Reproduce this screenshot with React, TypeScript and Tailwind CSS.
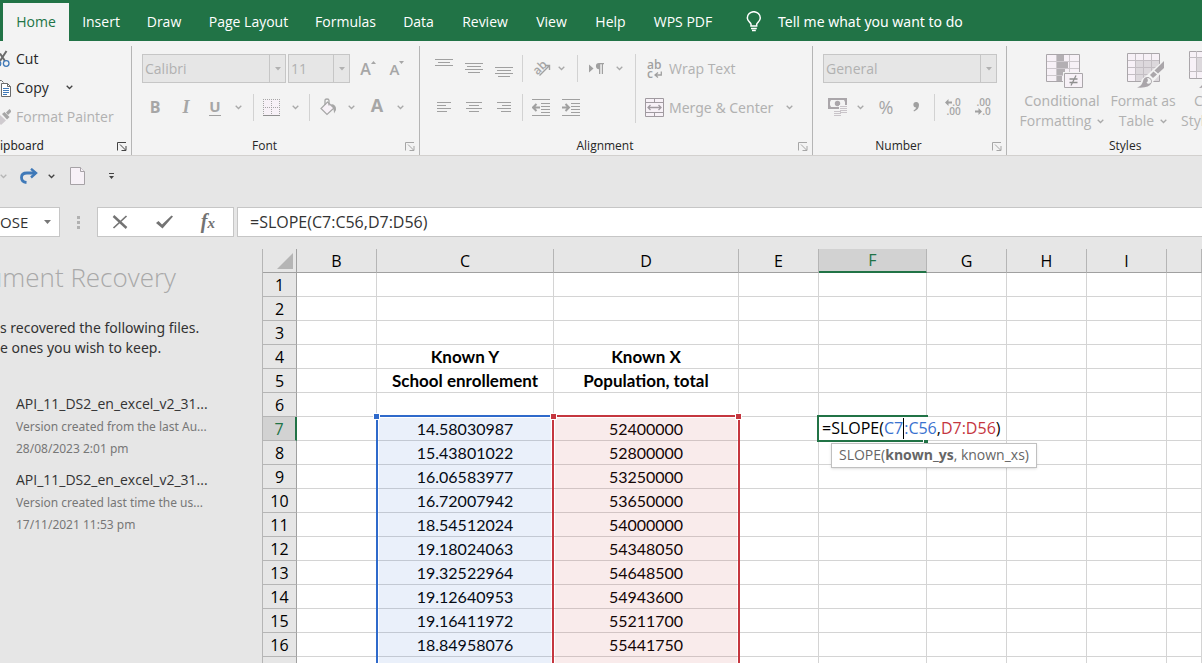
import React from "react";

const tabs = [
  { name: "Insert", width: "w-16" },
  { name: "Draw", width: "w-[62px]" },
  { name: "Page Layout", width: "w-[107px]" },
  { name: "Formulas", width: "w-[87px]" },
  { name: "Data", width: "w-[59px]" },
  { name: "Review", width: "w-[74px]" },
  { name: "View", width: "w-[59px]" },
  { name: "Help", width: "w-[59px]" },
  { name: "WPS PDF", width: "w-[86px]" },
];

const columns = ["B", "C", "D", "E", "F", "G", "H", "I", ""];

const rows: { y: string; x: string }[] = [
  { y: "", x: "" },
  { y: "", x: "" },
  { y: "", x: "" },
  { y: "Known Y", x: "Known X" },
  { y: "School enrollement", x: "Population, total" },
  { y: "", x: "" },
  { y: "14.58030987", x: "52400000" },
  { y: "15.43801022", x: "52800000" },
  { y: "16.06583977", x: "53250000" },
  { y: "16.72007942", x: "53650000" },
  { y: "18.54512024", x: "54000000" },
  { y: "19.18024063", x: "54348050" },
  { y: "19.32522964", x: "54648500" },
  { y: "19.12640953", x: "54943600" },
  { y: "19.16411972", x: "55211700" },
  { y: "18.84958076", x: "55441750" },
  { y: "", x: "" },
];

const recovered = [
  {
    file: "API_11_DS2_en_excel_v2_31...",
    note: "Version created from the last Au...",
    date: "28/08/2023 2:01 pm",
  },
  {
    file: "API_11_DS2_en_excel_v2_31...",
    note: "Version created last time the us...",
    date: "17/11/2021 11:53 pm",
  },
];

/* ---------- small shared pieces ---------- */

const Chevron = ({ color = "#a9a9a9" }: { color?: string }) => (
  <svg width="7" height="5" viewBox="0 0 7 5" fill="none" className="shrink-0">
    <path d="M0.7 0.8 L3.5 3.5 L6.3 0.8" stroke={color} strokeWidth="1.3" />
  </svg>
);

const Tool = ({
  label,
  width,
  children,
}: {
  label: string;
  width: string;
  children: React.ReactNode;
}) => (
  <button
    aria-label={label}
    className={`flex h-7 shrink-0 items-center justify-center text-[#a6a6a6] ${width}`}
  >
    {children}
  </button>
);

const Divider = () => <div className="h-[27px] w-px shrink-0 bg-[#d2d2d2]" />;

const Combo = ({
  label,
  value,
  width,
}: {
  label: string;
  value: string;
  width: string;
}) => (
  <div
    className={`flex h-[29px] shrink-0 border border-[#c6c6c6] bg-[#e6e6e6] ${width}`}
  >
    <select
      aria-label={label}
      className="min-w-0 flex-1 appearance-none bg-transparent pl-[2px] text-[14px] text-[#b1b1b1] outline-none"
    >
      <option>{value}</option>
    </select>
    <div className="flex w-4 items-center justify-center border-l border-[#c6c6c6]">
      <svg width="6" height="4" viewBox="0 0 6 4">
        <path d="M0 0H6L3 3.5Z" fill="#b1b1b1" />
      </svg>
    </div>
  </div>
);

const Launcher = ({ color = "#a6a6a6" }: { color?: string }) => (
  <svg width="10" height="9" viewBox="0 0 10 9" fill="none" stroke={color}>
    <path d="M0.5 8.5V0.5H9" />
    <path d="M3 2.5L8.5 8M9 4V8.5H4.5" />
  </svg>
);

const GroupLabel = ({ name }: { name: string }) => (
  <div className="flex h-[18px] items-center pr-1 text-[12px] text-[#262626]">
    <span className="flex-1 pr-2 text-center">{name}</span>
    <button aria-label={`${name} settings`}>
      <Launcher />
    </button>
  </div>
);

/* stacked lines used by the six alignment buttons */
const Lines = ({ items }: { items: [number, number, number][] }) => (
  <svg width="18" height="20" viewBox="0 0 18 20" fill="#a0a0a0">
    {items.map(([x, y, w]) => (
      <rect key={y} x={x} y={y} width={w} height="1" />
    ))}
  </svg>
);

/* ---------- ribbon ---------- */

const TopTabs = () => (
  <nav className="flex h-[41px] shrink-0 items-end bg-[#217346] pl-[3px] text-[14px] text-white">
    <button className="h-[38px] w-[66px] shrink-0 bg-[#f3f3f3] pb-[2px] text-[#217346]">
      Home
    </button>
    {tabs.map((tab) => (
      <button
        key={tab.name}
        className={`h-[38px] shrink-0 pb-[2px] ${tab.width}`}
      >
        {tab.name}
      </button>
    ))}
    <button className="flex h-[38px] items-center gap-4 pb-[2px] pl-5 font-['Noto_Sans',sans-serif] whitespace-nowrap">
      <svg
        width="16"
        height="21"
        viewBox="0 0 16 21"
        fill="none"
        stroke="white"
        strokeWidth="1.5"
      >
        <path d="M5 15V13.2C5 11.8 1.3 10.3 1.3 6.9A6.5 6.2 0 0 1 14.3 6.9C14.3 10.3 10.7 11.8 10.7 13.2V15Z" />
        <path d="M5 17.4H10.8M6 19.6H9.8" />
      </svg>
      Tell me what you want to do
    </button>
  </nav>
);

const ClipboardGroup = () => (
  <section className="flex w-[132px] shrink-0 flex-col justify-between border-r border-[#b5b5b5] text-[14px] text-[#262626]">
    <div className="flex flex-col">
      <button className="flex h-[27px] items-center gap-[5px] pb-[2px]">
        <svg width="11" height="18" viewBox="0 0 11 18" fill="none">
          <path d="M6.5 1L0 11M0 3.5L5 11" stroke="#6b6b6b" strokeWidth="2" />
          <circle cx="6.2" cy="13.5" r="2.8" stroke="#3f79b8" strokeWidth="1.3" />
          <path d="M0 11.5Q1.5 13.5 0 16" stroke="#3f79b8" strokeWidth="1.3" />
        </svg>
        Cut
      </button>
      <button className="flex h-[29px] items-center gap-[5px]">
        <svg width="11" height="18" viewBox="0 0 11 18" fill="none">
          <path d="M0 1.5H1.5L3.5 3.5" stroke="#6b6b6b" />
          <path d="M1.5 4.5H7.5L10.5 7.5V17.5H1.5Z" fill="white" stroke="#6b6b6b" />
          <path d="M7.5 4.5V7.5H10.5" stroke="#6b6b6b" />
          <path d="M3 9.5H9M3 11.5H9M3 13.5H9M3 15.5H7" stroke="#3f79b8" />
        </svg>
        Copy
        <span className="pl-3">
          <Chevron color="#444444" />
        </span>
      </button>
      <button className="flex h-[29px] items-center gap-[5px] whitespace-nowrap text-[#b1b1b1]">
        <svg width="11" height="18" viewBox="0 0 11 18">
          <path d="M0 7L6 12.5L1 17L0 16Z" fill="#cfcbcf" />
          <path d="M2 6L4.5 4L9.5 9L7 11.5Z" fill="#a6a6a6" />
          <path d="M6 4.5L9.5 1L11 2.5V4L8 7Z" fill="#a6a6a6" />
        </svg>
        Format Painter
      </button>
    </div>
    <div className="flex h-[18px] items-center justify-between pr-1 text-[12px]">
      <span className="font-['Noto_Sans',sans-serif]">ipboard</span>
      <button aria-label="Clipboard settings">
        <Launcher color="#444444" />
      </button>
    </div>
  </section>
);

const FontGroup = () => (
  <section className="flex w-[288px] shrink-0 flex-col justify-between border-r border-[#b5b5b5]">
    <div className="flex flex-col gap-[10px] pt-2">
      <div className="flex items-center pl-[10px]">
        <Combo label="Font" value="Calibri" width="w-36" />
        <div className="w-[2px]" />
        <Combo label="Font size" value="11" width="w-[62px]" />
        <div className="w-[3px]" />
        <Tool label="Increase font size" width="w-[30px]">
          <span className="text-[16px] leading-5 font-semibold">A</span>
          <svg width="5" height="16" viewBox="0 0 5 16">
            <path d="M0 3L2.5 0L5 3Z" fill="#a6a6a6" />
          </svg>
        </Tool>
        <Tool label="Decrease font size" width="w-7">
          <span className="text-[15px] leading-5 font-semibold">A</span>
          <svg width="5" height="16" viewBox="0 0 5 16">
            <path d="M0 0H5L2.5 3Z" fill="#a6a6a6" />
          </svg>
        </Tool>
      </div>
      <div className="flex items-center pl-2">
        <Tool label="Bold" width="w-[30px]">
          <span className="text-[16px] font-bold">B</span>
        </Tool>
        <Tool label="Italic" width="w-8">
          <span className="font-['Liberation_Serif',serif] text-[18px] font-bold italic">I</span>
        </Tool>
        <Tool label="Underline" width="w-[26px]">
          <span className="border-b border-[#a0a0a0] text-[15px] leading-[17px] font-bold">U</span>
        </Tool>
        <Tool label="Underline options" width="w-5">
          <Chevron />
        </Tool>
        <div className="w-[5px]" />
        <Divider />
        <Tool label="Borders" width="w-[34px]">
          <svg width="17" height="17" viewBox="0 0 17 17" fill="none">
            <path d="M0.5 0.5H16.5V16H0.5Z" fill="#f7f1f7" />
            <path d="M0 0.5H17M0 8.5H17M0.5 0V16M8.5 0V16M16.5 0V16" stroke="#a6a6a6" strokeDasharray="1 1" />
            <path d="M0 16.5H17" stroke="#8f8f8f" />
          </svg>
        </Tool>
        <Tool label="Borders options" width="w-[14px]">
          <Chevron />
        </Tool>
        <div className="w-[7px]" />
        <Divider />
        <Tool label="Fill colour" width="w-9">
          <svg width="17" height="18" viewBox="0 0 17 18" fill="none">
            <path d="M7.5 4L14 10L7 16.5L1 10.5Z" fill="#f7f1f7" stroke="#a6a6a6" strokeWidth="1.2" />
            <path d="M5 7V2.5Q5 1 7 1T9 2.5V7.5" stroke="#a6a6a6" strokeWidth="1.3" />
            <path d="M11 6Q16.5 6.5 16 12L14 15.5Q14 10 11 6Z" fill="#a6a6a6" />
          </svg>
        </Tool>
        <Tool label="Fill colour options" width="w-[10px]">
          <Chevron />
        </Tool>
        <Tool label="Font colour" width="w-[42px]">
          <span className="pb-1 text-[18px] font-bold">A</span>
        </Tool>
        <Tool label="Font colour options" width="w-1">
          <Chevron />
        </Tool>
      </div>
    </div>
    <GroupLabel name="Font" />
  </section>
);

const AlignmentGroup = () => (
  <section className="flex w-[393px] shrink-0 flex-col justify-between border-r border-[#b5b5b5]">
    <div className="flex pt-2">
      <div className="flex flex-col gap-[10px] pl-[9px]">
        <div className="flex h-[29px] items-center">
          <Tool label="Top align" width="w-[30px]">
            <Lines items={[[0, 0, 18], [3, 3, 12], [0, 6, 18]]} />
          </Tool>
          <Tool label="Middle align" width="w-[30px]">
            <Lines items={[[0, 4, 18], [2, 7, 14], [0, 10, 18], [3, 13, 12]]} />
          </Tool>
          <Tool label="Bottom align" width="w-[30px]">
            <Lines items={[[0, 8, 18], [2, 11, 14], [0, 14, 18], [3, 17, 12]]} />
          </Tool>
          <div className="w-[3px]" />
          <Divider />
          <Tool label="Orientation" width="w-9">
            <span className="relative flex size-[19px] items-center justify-center">
              <span className="-rotate-45 pb-1 text-[12px] leading-3 font-semibold">ab</span>
              <svg width="19" height="18" viewBox="0 0 19 18" fill="none" className="absolute inset-0">
                <path d="M7.5 16.5L17 7M13 6.5H17.5V11" stroke="#a0a0a0" strokeWidth="1.4" />
              </svg>
            </span>
          </Tool>
          <Tool label="Orientation options" width="w-1">
            <Chevron />
          </Tool>
          <div className="w-[14px]" />
          <Divider />
          <Tool label="Text direction" width="w-9">
            <svg width="15" height="12" viewBox="0 0 15 12" fill="#a0a0a0">
              <path d="M0 1.5L4.5 5.5L0 9.5Z" />
              <path d="M10 0H15V1.3H14V11H12.8V1.3H11.3V11H10V6.2A3.1 3.1 0 0 1 10 0Z" />
            </svg>
          </Tool>
          <Tool label="Text direction options" width="w-[10px]">
            <Chevron />
          </Tool>
        </div>
        <div className="flex items-center">
          <Tool label="Align left" width="w-[30px]">
            <Lines items={[[2, 5, 14], [2, 8, 9], [2, 11, 14], [2, 14, 10]]} />
          </Tool>
          <Tool label="Center" width="w-[30px]">
            <Lines items={[[1, 5, 16], [4, 8, 10], [1, 11, 16], [4, 14, 10]]} />
          </Tool>
          <Tool label="Align right" width="w-[30px]">
            <Lines items={[[2, 5, 14], [7, 8, 9], [2, 11, 14], [6, 14, 10]]} />
          </Tool>
          <div className="w-[3px]" />
          <Divider />
          <div className="w-[3px]" />
          <Tool label="Decrease indent" width="w-[30px]">
            <svg width="18" height="17" viewBox="0 0 18 17" fill="none" stroke="#a0a0a0">
              <path d="M0 0.5H18M9 4.5H18M9 7.5H18M9 10.5H18M9 13.5H18M0 16.5H18" />
              <path d="M8 8.5H1.5M4.5 5L1 8.5L4.5 12" strokeWidth="2" />
            </svg>
          </Tool>
          <Tool label="Increase indent" width="w-[30px]">
            <svg width="18" height="17" viewBox="0 0 18 17" fill="none" stroke="#a0a0a0">
              <path d="M0 0.5H18M9 4.5H18M9 7.5H18M9 10.5H18M9 13.5H18M0 16.5H18" />
              <path d="M0 8.5H7M3.5 5L7 8.5L3.5 12" strokeWidth="2" />
            </svg>
          </Tool>
        </div>
      </div>
      <div className="ml-[11px] h-[69px] w-px bg-[#d2d2d2]" />
      <div className="flex flex-col gap-[10px] pl-[9px] text-[14px] text-[#b1b1b1]">
        <button className="flex h-[29px] items-center gap-[6px] whitespace-nowrap">
          <span className="flex w-[18px] flex-col items-start pl-[2px] text-[12px] leading-[9px] font-semibold text-[#a0a0a0]">
            <span>ab</span>
            <span className="flex items-end gap-px">
              c
              <svg width="8" height="7" viewBox="0 0 8 7" fill="none">
                <path d="M7.3 0.5V4H1.5M4 1.5L1 4L4 6.5" stroke="#a0a0a0" strokeWidth="1.3" />
              </svg>
            </span>
          </span>
          Wrap Text
        </button>
        <button className="flex h-7 items-center gap-[5px] whitespace-nowrap">
          <svg width="19" height="19" viewBox="0 0 19 19" fill="none" stroke="#a09aa0">
            <path d="M0.5 0.5H18.5V18.5H0.5Z" fill="#f7f1f7" />
            <path d="M0.5 4.5H18.5M0.5 14.5H18.5M9.5 0.5V4.5M9.5 14.5V18.5" />
            <path d="M3 9.5H16M5.5 7L3 9.5L5.5 12M13.5 7L16 9.5L13.5 12" strokeWidth="1.3" />
          </svg>
          <span className="font-['Noto_Sans',sans-serif]">Merge &amp; Center</span>
          <span className="pl-2">
            <Chevron />
          </span>
        </button>
      </div>
    </div>
    <GroupLabel name="Alignment" />
  </section>
);

const NumberGroup = () => (
  <section className="flex w-[194px] shrink-0 flex-col justify-between border-r border-[#b5b5b5]">
    <div className="flex flex-col gap-[10px] pt-2 pl-[10px]">
      <Combo label="Number format" value="General" width="w-[174px]" />
      <div className="flex items-center">
        <Tool label="Accounting format" width="w-7">
          <svg width="19" height="19" viewBox="0 0 19 19">
            <path d="M0 0H19V11H0Z" fill="#aaa6aa" />
            <path d="M3 2H16L17 4V7L16 9H3L2 7V4Z" fill="#f3f3f3" />
            <circle cx="9.5" cy="5.5" r="2.7" fill="#aaa6aa" />
            <rect x="11" y="7" width="8" height="9" fill="#f3f3f3" />
            <path d="M12 8.5H19M12 10.5H19M12 12.5H19M12 14.5H19M6 13.5H13M6 15.5H13M6 17.5H13" stroke="#c9c4c9" strokeWidth="1.2" />
          </svg>
        </Tool>
        <Tool label="Accounting options" width="w-[18px]">
          <Chevron />
        </Tool>
        <Tool label="Percent style" width="w-[34px]">
          <span className="text-[18px]">%</span>
        </Tool>
        <Tool label="Comma style" width="w-[26px]">
          <svg width="7" height="10" viewBox="0 0 7 10">
            <path d="M3 0A2.8 2.8 0 0 1 6 3Q6 7.5 1 9.5L0.5 8.5Q3 7 3.2 5.4A2.7 2.7 0 0 1 3 0Z" fill="#a0a0a0" />
          </svg>
        </Tool>
        <div className="w-[5px]" />
        <Divider />
        <div className="w-[3px]" />
        <Tool label="Increase decimal" width="w-[30px]">
          <span className="flex flex-col items-end text-[10px] leading-[9px] font-semibold">
            <span className="flex items-center">
              <svg width="7" height="7" viewBox="0 0 7 7" fill="#a0a0a0">
                <path d="M0 3.5L3.5 0V2.5H7V4.5H3.5V7Z" />
              </svg>
              .0
            </span>
            <span>.00</span>
          </span>
        </Tool>
        <Tool label="Decrease decimal" width="w-[30px]">
          <span className="flex flex-col items-end text-[10px] leading-[9px] font-semibold">
            <span>.00</span>
            <span className="flex items-center">
              <svg width="7" height="7" viewBox="0 0 7 7" fill="#a0a0a0">
                <path d="M7 3.5L3.5 0V2.5H0V4.5H3.5V7Z" />
              </svg>
              .0
            </span>
          </span>
        </Tool>
      </div>
    </div>
    <GroupLabel name="Number" />
  </section>
);

const StylesGroup = () => (
  <section className="flex min-w-0 flex-1 flex-col justify-between overflow-hidden">
    <div className="flex pt-[5px] pl-[10px] text-[14px] leading-5 text-[#b1b1b1]">
      <button className="flex w-[90px] shrink-0 flex-col items-center">
        <svg width="38" height="40" viewBox="0 0 38 40" fill="none" className="ml-[5px]">
          <path d="M0.5 3.5H33.5V30.5H0.5Z" fill="#f7f1f7" />
          <path d="M0.5 10.5H33.5M0.5 17.5H33.5M0.5 24.5H33.5M10.5 3V30M23.5 3V30" stroke="#cdc8cd" />
          <path d="M11 4H18V10H11ZM11 11H22V17H11ZM11 18H19V24H11ZM11 25H16V30H11Z" fill="#b3afb3" />
          <path d="M0.5 3.5H33.5V30.5H0.5Z" stroke="#aaa6aa" />
          <path d="M17 21H37V38H17Z" fill="#f3f3f3" />
          <path d="M18.5 22.5H36.5V36.5H18.5Z" fill="#f7f1f7" stroke="#aaa6aa" />
          <path d="M23.5 28H31.5M23.5 31.5H31.5M30 24.5L25 34.5" stroke="#8f8f8f" strokeWidth="1.3" />
        </svg>
        <span className="font-['Noto_Sans',sans-serif]">Conditional</span>
        <span className="flex items-center gap-[6px]">
          Formatting <Chevron />
        </span>
      </button>
      <button className="flex w-[72px] shrink-0 flex-col items-center whitespace-nowrap">
        <svg width="38" height="40" viewBox="0 0 38 40" fill="none" className="ml-[5px]">
          <path d="M0.5 2.5H32.5V30.5H0.5Z" fill="#f7f1f7" />
          <path d="M9 10H32V30H9Z" fill="#dcd8dc" />
          <path d="M0.5 9.5H32.5M0.5 16.5H32.5M0.5 23.5H32.5M8.5 3V30M16.5 3V30M24.5 3V30" stroke="#c3bec3" />
          <path d="M0.5 2.5H32.5V30.5H0.5Z" stroke="#aaa6aa" />
          <path d="M38 8V18L25 32Q23 37 10 38L7 37Q14 33 15 28L20 24Z" fill="#f3f3f3" />
          <path d="M37 10V17L31 22.5L27.5 19.5Z" fill="#aaa6aa" />
          <path d="M26.5 20.5L30 23.5L26 27L23 24Z" fill="#aaa6aa" />
          <path d="M10 36.5Q15 35 16 30Q17 25.5 21.5 26Q26 28 24.5 32Q22 37.5 10 36.5Z" fill="#aaa6aa" />
          <path d="M20 27Q24.5 27 24 31.5Q21 34 19.5 31.5Q22 30 20 27Z" fill="#f3f3f3" />
        </svg>
        <span>Format as</span>
        <span className="flex items-center gap-[6px]">
          Table <Chevron />
        </span>
      </button>
      <button className="ml-[2px] flex w-16 shrink-0 flex-col items-start">
        <svg width="38" height="40" viewBox="0 0 38 40" fill="none" className="ml-2">
          <path d="M0.5 0.5H33.5V27.5H0.5Z" fill="#f7f1f7" stroke="#aaa6aa" />
          <path d="M8 7H26V20H8Z" fill="#dcd8dc" />
          <path d="M0.5 6.5H33.5M0.5 20.5H33.5M7.5 0V27" stroke="#c3bec3" />
          <path d="M10 37Q14 34 14 31L20 26V36Z" fill="#aaa6aa" />
        </svg>
        <span className="pl-[13px]">Cell</span>
        <span>Styles</span>
      </button>
    </div>
    <div className="h-[18px] pl-[102px] text-[12px] leading-[18px] text-[#262626]">
      Styles
    </div>
  </section>
);

/* ---------- bars under the ribbon ---------- */

const QuickAccess = () => (
  <div className="flex h-10 shrink-0 items-center">
    <button aria-label="Undo options" className="w-5">
      <Chevron color="#b5b5b5" />
    </button>
    <button aria-label="Redo">
      <svg width="18" height="16" viewBox="0 0 18 16" fill="none" stroke="#3f79b8">
        <path d="M6.5 14.5Q1.5 14 1.5 9.5Q1.5 5 7 5H15.5" strokeWidth="2.8" />
        <path d="M11 0.8L16 5L11 9.5" strokeWidth="2.4" />
      </svg>
    </button>
    <button aria-label="Redo options" className="flex w-[26px] justify-center">
      <Chevron color="#444444" />
    </button>
    <button aria-label="New file" className="ml-[6px]">
      <svg width="15" height="18" viewBox="0 0 15 18" fill="#f7f1f7" stroke="#a6a2a6">
        <path d="M0.5 0.5H10.5L14.5 4.5V17.5H0.5Z" />
        <path d="M10.5 0.5V4.5H14.5" />
      </svg>
    </button>
    <button aria-label="Customise toolbar" className="ml-6">
      <svg width="5" height="6" viewBox="0 0 5 6" fill="#444444">
        <path d="M0 0H5V1H0ZM0 3H5L2.5 6Z" />
      </svg>
    </button>
  </div>
);

const FormulaBar = () => (
  <div className="mt-[11px] flex h-[30px] shrink-0 text-[#333333]">
    <div className="flex w-[60px] shrink-0 items-center justify-between border border-l-0 border-[#c6c6c6] bg-white pr-2 text-[15px]">
      <span>OSE</span>
      <button aria-label="Name box options">
        <svg width="7" height="4" viewBox="0 0 7 4">
          <path d="M0 0H7L3.5 4Z" fill="#777777" />
        </svg>
      </button>
    </div>
    <div className="flex w-[37px] shrink-0 flex-col items-center justify-center gap-[2px]">
      <div className="size-[3px] bg-[#b1b1b1]" />
      <div className="size-[3px] bg-[#b1b1b1]" />
      <div className="size-[3px] bg-[#b1b1b1]" />
    </div>
    <div className="flex w-[137px] shrink-0 items-center justify-around border border-[#c6c6c6] bg-white pr-1">
      <button aria-label="Cancel">
        <svg width="16" height="14" viewBox="0 0 16 14" fill="none" stroke="#737373">
          <path d="M1.5 1L14.5 13" strokeWidth="2.4" />
          <path d="M14.5 1L1.5 13" strokeWidth="1.7" />
        </svg>
      </button>
      <button aria-label="Enter">
        <svg width="17" height="14" viewBox="0 0 17 14">
          <path d="M0 8L2.5 6L6 9.5L15.5 0.5L17 1.5L6.5 13.5Z" fill="#737373" />
        </svg>
      </button>
      <button
        aria-label="Insert function"
        className="font-['Liberation_Serif',serif] text-[20px] leading-5 font-bold text-[#737373] italic"
      >
        f<span className="text-[15px]">x</span>
      </button>
    </div>
    <input
      aria-label="Formula"
      defaultValue="=SLOPE(C7:C56,D7:D56)"
      className="ml-[3px] min-w-0 flex-1 border border-r-0 border-[#c6c6c6] bg-white pl-3 text-[16px] outline-none"
    />
  </div>
);

const RecoveryPane = () => (
  <aside className="w-[262px] shrink-0 overflow-hidden font-['Noto_Sans',sans-serif] text-[14px] text-[#333333]">
    <div className="flex w-44 justify-end pt-[10px] font-['Open_Sans',sans-serif] text-[26px] leading-9 font-light whitespace-nowrap text-[#a9a9a9]">
      <h2>ument Recovery</h2>
    </div>
    <p className="mt-[23px] leading-5">
      s recovered the following files.
      <br />e ones you wish to keep.
    </p>
    <ul className="mt-[34px] flex flex-col pl-4">
      {recovered.map((item) => (
        <li key={item.date} className="h-[76px] text-[12px] leading-[22px] text-[#777777]">
          <div className="font-['Open_Sans',sans-serif] text-[14px] leading-6 text-[#333333]">
            {item.file}
          </div>
          <div>{item.note}</div>
          <div>{item.date}</div>
        </li>
      ))}
    </ul>
  </aside>
);

/* ---------- sheet ---------- */

const Handle = ({ className }: { className: string }) => (
  <span className={`absolute size-[7px] border border-white ${className}`} />
);

const EditingCell = () => (
  <>
    <div className="absolute -top-[2px] -right-[2px] -left-[2px] z-10 h-[27px] border-2 border-r-0 border-[#217346] bg-white" />
    <span className="absolute -right-[2px] -bottom-[3px] z-10 size-[5px] border-t border-l border-white bg-[#217346]" />
    <div className="absolute top-0 left-0 z-20 flex h-[23px] items-center bg-white pl-[3px] font-['Open_Sans',sans-serif] whitespace-nowrap">
      =SLOPE(<span className="text-[#3a72cf]">C7</span>
      <span className="h-[21px] w-px bg-black" />
      <span className="text-[#3a72cf]">:C56</span>,
      <span className="text-[#c5363f]">D7:D56</span>)
    </div>
    <div className="absolute top-[26px] left-3 z-20 flex h-[25px] items-center border border-[#c0c0c0] bg-white px-[7px] pb-[2px] font-['Open_Sans',sans-serif] text-[14px] whitespace-nowrap text-[#666666] shadow-sm">
      SLOPE(<b>known_ys</b>,&nbsp;known_xs)
    </div>
  </>
);

const Sheet = () => (
  <table className="w-full table-fixed border-separate border-spacing-0 border-l border-[#b5b5b5] text-center font-['Lato',sans-serif] text-[16px] leading-[23px] text-black">
    <colgroup>
      <col className="w-[34px]" />
      <col className="w-20" />
      <col className="w-[177px]" />
      <col className="w-[185px]" />
      <col className="w-20" />
      <col className="w-[108px]" />
      <col className="w-20" />
      <col className="w-20" />
      <col className="w-20" />
      <col />
    </colgroup>
    <thead>
      <tr className="h-6 font-['Open_Sans',sans-serif] leading-[21px]">
        <th aria-label="Select all" className="border-r border-b border-[#a0a0a0] p-0">
          <svg width="16" height="16" viewBox="0 0 16 16" className="mr-[3px] ml-auto">
            <path d="M16 0V16H0Z" fill="#b5b5b5" />
          </svg>
        </th>
        {columns.map((name, i) => (
          <th
            key={i}
            className={
              name === "F"
                ? "border-r border-b-2 border-r-[#b5b5b5] border-b-[#217346] bg-[#d2d2d2] p-0 pt-px font-normal text-[#217346]"
                : "border-r border-b border-r-[#b5b5b5] border-b-[#a0a0a0] p-0 pt-[2px] font-normal"
            }
          >
            {name}
          </th>
        ))}
      </tr>
    </thead>
    <tbody>
      {rows.map((row, i) => (
        <tr key={i} className="h-6">
          <th
            className={
              i === 6
                ? "border-r-2 border-b border-r-[#217346] border-b-[#b5b5b5] bg-[#d2d2d2] p-0 pt-[2px] font-['Open_Sans',sans-serif] leading-[21px] font-normal text-[#217346]"
                : "border-r border-b border-r-[#a0a0a0] border-b-[#b5b5b5] p-0 pt-[2px] font-['Open_Sans',sans-serif] leading-[21px] font-normal"
            }
          >
            {i + 1}
          </th>
          {columns.map((name, j) => (
            <td
              key={j}
              className={`relative border-r border-b border-[#d4d4d4] bg-white p-0 ${
                i < 6 ? "text-[17px] font-bold" : ""
              }`}
            >
              {name === "C" && row.y}
              {name === "D" && row.x}
              {i === 6 && name === "C" && (
                <div className="absolute -top-[2px] -right-px -left-px z-10 h-[300px] border-2 border-[#2f6acb] bg-[#2f6acb]/10 bg-clip-content p-px">
                  <Handle className="-top-[4px] -left-[5px] bg-[#2f6acb]" />
                </div>
              )}
              {i === 6 && name === "D" && (
                <div className="absolute -top-[2px] -right-[2px] -left-[2px] z-20 h-[300px] border-2 border-[#c5363f] bg-[#c5363f]/10 bg-clip-content p-px">
                  <Handle className="-top-[4px] -left-[4px] bg-[#c5363f]" />
                  <Handle className="-top-[4px] -right-[4px] bg-[#c5363f]" />
                </div>
              )}
              {i === 6 && name === "F" && <EditingCell />}
            </td>
          ))}
        </tr>
      ))}
    </tbody>
  </table>
);

const App = () => {
  return (
    <div className="flex h-screen flex-col overflow-hidden bg-[#e6e6e6] font-['Open_Sans',sans-serif]">
      <TopTabs />
      <div className="flex h-[115px] shrink-0 border-b border-[#d2d0ce] bg-[#f3f3f3] pt-[5px]">
        <ClipboardGroup />
        <FontGroup />
        <AlignmentGroup />
        <NumberGroup />
        <StylesGroup />
      </div>
      <QuickAccess />
      <FormulaBar />
      <main className="mt-3 flex min-h-0 flex-1">
        <RecoveryPane />
        <div className="min-w-0 flex-1 overflow-hidden">
          <Sheet />
        </div>
      </main>
    </div>
  );
};

export default App;
